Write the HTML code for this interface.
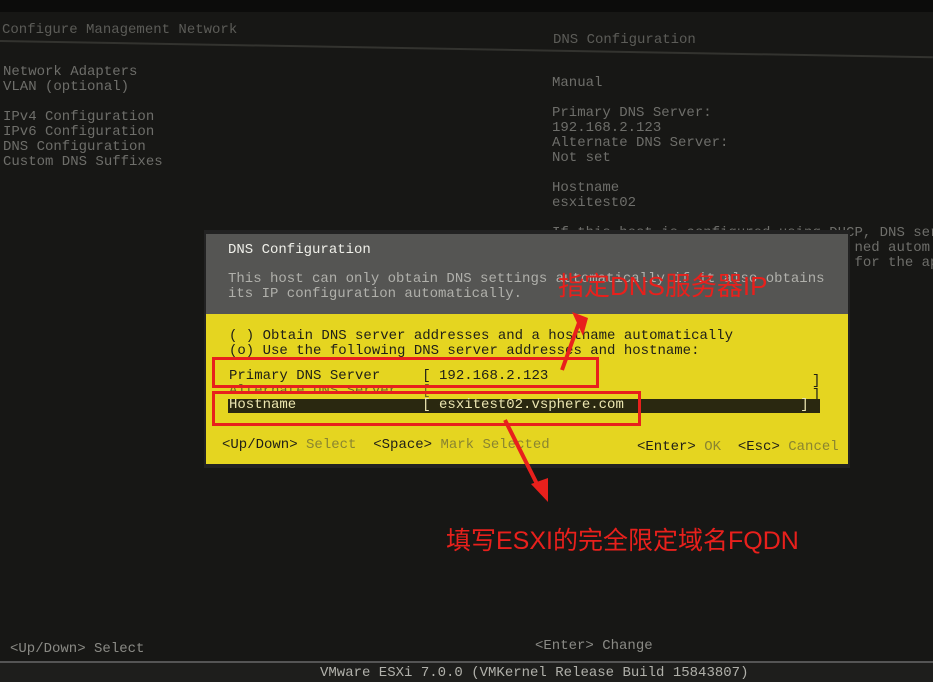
<!DOCTYPE html>
<html><head><meta charset="utf-8"><style>
body{margin:0;width:933px;height:682px;background:#171715;overflow:hidden;position:relative;font-family:"Liberation Mono",monospace;font-size:14px;}
.t{position:absolute;white-space:pre;line-height:15px;color:#6e6e6a;}
.d{color:#202018}
.k{color:#8a8530}
.r{position:absolute;border:3px solid #e8201c;box-sizing:border-box}
.cn{position:absolute;font-family:"Liberation Sans","Noto Sans CJK SC",sans-serif;color:#e8201c;white-space:nowrap}
</style></head><body>
<div style="position:absolute;left:0;top:0;width:933px;height:12px;background:#0c0c0b"></div>
<div style="position:absolute;left:0;top:40px;width:933px;height:2px;background:#33332f;transform:rotate(1deg);transform-origin:0 0"></div>
<div class="t" style="left:2px;top:23px;color:#5c5c58">Configure Management Network</div>
<div class="t" style="left:553px;top:33px;color:#5c5c58">DNS Configuration</div>
<div class="t" style="left:3px;top:65px">Network Adapters
VLAN (optional)

IPv4 Configuration
IPv6 Configuration
DNS Configuration
Custom DNS Suffixes</div>
<div class="t" style="left:552px;top:76px">Manual

Primary DNS Server:
192.168.2.123
Alternate DNS Server:
Not set

Hostname
esxitest02

If this host is configured using DHCP, DNS ser
                                    ned autom
                                    for the ap</div>
<div style="position:absolute;left:204px;top:230px;width:646px;height:238px;background:#222"></div>
<div style="position:absolute;left:206px;top:234px;width:642px;height:80px;background:#555553"></div>
<div style="position:absolute;left:206px;top:314px;width:642px;height:150px;background:#e5d520"></div>
<div class="t" style="left:228px;top:243px;color:#f0f0ea">DNS Configuration</div>
<div class="t" style="left:228px;top:272px;color:#b0b0ab">This host can only obtain DNS settings automatically if it also obtains
its IP configuration automatically.</div>
<div class="t d" style="left:229px;top:329px">( ) Obtain DNS server addresses and a hostname automatically
(o) Use the following DNS server addresses and hostname:</div>
<div class="t d" style="left:229px;top:369px">Primary DNS Server     [ 192.168.2.123</div>
<div class="t d" style="left:229px;top:384px;opacity:.6">Alternate DNS Server   [</div>
<div class="t d" style="left:812px;top:374px">]</div>
<div class="t d" style="left:812px;top:388px">]</div>
<div style="position:absolute;left:228px;top:399px;width:592px;height:14px;background:#2a2810"></div>
<div class="t" style="left:229px;top:398px;color:#ece6b0">Hostname               [ esxitest02.vsphere.com                     ]</div>
<div class="t d" style="left:222px;top:438px">&lt;Up/Down&gt; <span class="k">Select</span>  &lt;Space&gt; <span class="k">Mark Selected</span></div>
<div class="t d" style="left:637px;top:440px">&lt;Enter&gt; <span class="k">OK</span>  &lt;Esc&gt; <span class="k">Cancel</span></div>
<div class="r" style="left:212px;top:357px;width:387px;height:31px"></div>
<div class="r" style="left:212px;top:391px;width:429px;height:35px"></div>
<div class="cn" style="left:558px;top:266px;font-size:26px">指定DNS服务器IP</div>
<svg style="position:absolute;left:0;top:0" width="933" height="682">
<path d="M562 370 L580 320" stroke="#e8201c" stroke-width="4"/>
<path d="M572 312 L588 318 L583 336 Z" fill="#e8201c"/>
<path d="M505 420 L540 490" stroke="#e8201c" stroke-width="4"/>
<path d="M531 484 L548 502 L548 478 Z" fill="#e8201c"/>
</svg>
<div class="cn" style="left:446px;top:521px;font-size:25px">填写ESXI的完全限定域名FQDN</div>
<div class="t" style="left:10px;top:642px;color:#8a8a85">&lt;Up/Down&gt; Select</div>
<div class="t" style="left:535px;top:639px;color:#8a8a85">&lt;Enter&gt; Change</div>
<div style="position:absolute;left:0;top:661px;width:933px;height:2px;background:#555"></div>
<div style="position:absolute;left:0;top:663px;width:933px;height:19px;background:#1e1e1c"></div>
<div class="t" style="left:320px;top:666px;color:#b0b0aa">VMware ESXi 7.0.0 (VMKernel Release Build 15843807)</div>
</body></html>
